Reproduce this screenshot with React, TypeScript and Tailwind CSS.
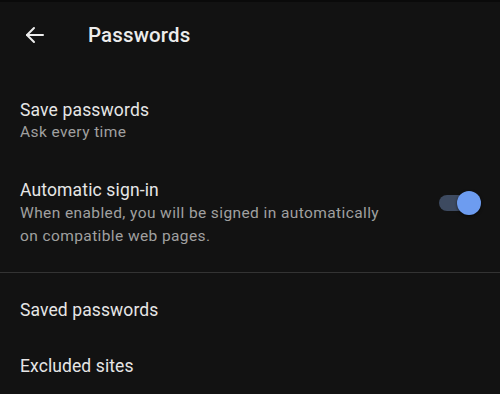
import React from "react";

function BackArrow() {
  return (
    <svg width="24" height="24" viewBox="0 0 24 24" fill="none" stroke="#ececec" strokeWidth="2" strokeLinecap="round" strokeLinejoin="round">
      <path d="M20 12H4" />
      <path d="M11 5l-7 7 7 7" />
    </svg>
  );
}

function Toggle({ on }: { on: boolean }) {
  return (
    <div className="relative w-[36px] h-[16px] shrink-0">
      <div className="absolute inset-0 rounded-full bg-[#3d4a60]" />
      <div
        className={
          on
            ? "absolute right-[-6px] top-[-4px] w-[24px] h-[24px] rounded-full bg-[#6d9cf0] shadow-[0_1px_3px_rgba(0,0,0,0.6)]"
            : "absolute left-[-6px] top-[-4px] w-[24px] h-[24px] rounded-full bg-[#bdbdbd]"
        }
      />
    </div>
  );
}

export default function App() {
  return (
    <div
      className="w-[500px] h-[394px] overflow-hidden bg-[#121212] text-[#e6e6e6] border-t-2 border-[#0a0a0a]"
      style={{ fontFamily: "Roboto, 'Noto Sans', sans-serif" }}
    >
      <header className="flex items-center h-[66px] pl-[23px]">
        <BackArrow />
        <h1 className="ml-[41px] text-[20.5px] font-medium tracking-[0.15px] text-[#ececec]">Passwords</h1>
      </header>

      <section className="pt-[30px] px-[20px]">
        <div className="flex flex-col">
          <span className="text-[17.5px] leading-[24px] tracking-[0.15px]">Save passwords</span>
          <span className="text-[15.5px] leading-[20px] text-[#a0a0a0] tracking-[0.4px]">Ask every time</span>
        </div>

        <div className="flex items-center mt-[36px]">
          <div className="flex flex-col flex-1">
            <span className="text-[17.5px] leading-[24px] tracking-[0.15px]">Automatic sign-in</span>
            <span className="text-[15.5px] leading-[23px] text-[#a0a0a0] tracking-[0.4px]">
              When enabled, you will be signed in automatically
              <br />
              on compatible web pages.
            </span>
          </div>
          <div className="mr-[5px] mb-[20px]">
            <Toggle on />
          </div>
        </div>
      </section>

      <div className="mt-[24px] h-px bg-[#333333]" />

      <nav className="px-[20px]">
        <div className="h-[74px] flex items-center text-[17.5px] tracking-[0.1px]">Saved passwords</div>
        <div className="h-[38px] flex items-center text-[17.5px] tracking-[0.1px]">Excluded sites</div>
      </nav>
    </div>
  );
}
